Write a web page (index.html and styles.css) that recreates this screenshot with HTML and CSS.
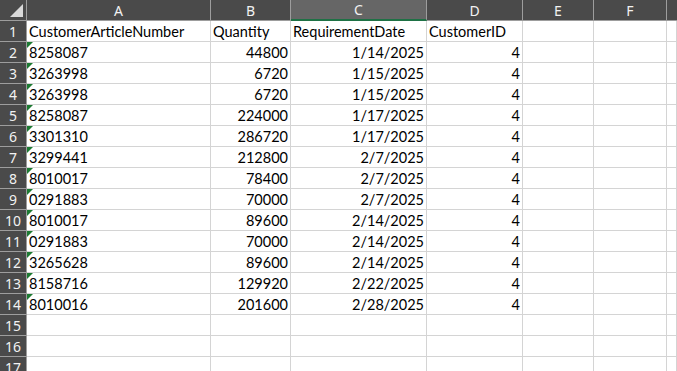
FILE: index.html
```html
<!DOCTYPE html>
<html lang="en">
<head>
    <meta charset="UTF-8">
    <title>Sheet1</title>
    <link rel="stylesheet" href="styles.css">
</head>
<body>

    <div class="sheet">
        <!-- Column headers -->
        <div class="hd corner">
            <svg width="13" height="13" viewBox="0 0 13 13"><polygon points="13,0 13,13 0,13" fill="#d9d9d9"/></svg>
        </div>
        <div class="hd">A</div>
        <div class="hd">B</div>
        <div class="hd selected">C</div>
        <div class="hd">D</div>
        <div class="hd">E</div>
        <div class="hd">F</div>
        <div class="hd last"></div>

        <!-- Row 1 -->
        <div class="rh">1</div>
        <div class="c">CustomerArticleNumber</div>
        <div class="c">Quantity</div>
        <div class="c">RequirementDate</div>
        <div class="c">CustomerID</div>
        <div class="c"></div><div class="c"></div><div class="c"></div>

        <div class="rh">2</div>
        <div class="c txt">8258087</div><div class="c num">44800</div><div class="c num">1/14/2025</div><div class="c num">4</div>
        <div class="c"></div><div class="c"></div><div class="c"></div>

        <div class="rh">3</div>
        <div class="c txt">3263998</div><div class="c num">6720</div><div class="c num">1/15/2025</div><div class="c num">4</div>
        <div class="c"></div><div class="c"></div><div class="c"></div>

        <div class="rh">4</div>
        <div class="c txt">3263998</div><div class="c num">6720</div><div class="c num">1/15/2025</div><div class="c num">4</div>
        <div class="c"></div><div class="c"></div><div class="c"></div>

        <div class="rh">5</div>
        <div class="c txt">8258087</div><div class="c num">224000</div><div class="c num">1/17/2025</div><div class="c num">4</div>
        <div class="c"></div><div class="c"></div><div class="c"></div>

        <div class="rh">6</div>
        <div class="c txt">3301310</div><div class="c num">286720</div><div class="c num">1/17/2025</div><div class="c num">4</div>
        <div class="c"></div><div class="c"></div><div class="c"></div>

        <div class="rh">7</div>
        <div class="c txt">3299441</div><div class="c num">212800</div><div class="c num">2/7/2025</div><div class="c num">4</div>
        <div class="c"></div><div class="c"></div><div class="c"></div>

        <div class="rh">8</div>
        <div class="c txt">8010017</div><div class="c num">78400</div><div class="c num">2/7/2025</div><div class="c num">4</div>
        <div class="c"></div><div class="c"></div><div class="c"></div>

        <div class="rh">9</div>
        <div class="c txt">0291883</div><div class="c num">70000</div><div class="c num">2/7/2025</div><div class="c num">4</div>
        <div class="c"></div><div class="c"></div><div class="c"></div>

        <div class="rh">10</div>
        <div class="c txt">8010017</div><div class="c num">89600</div><div class="c num">2/14/2025</div><div class="c num">4</div>
        <div class="c"></div><div class="c"></div><div class="c"></div>

        <div class="rh">11</div>
        <div class="c txt">0291883</div><div class="c num">70000</div><div class="c num">2/14/2025</div><div class="c num">4</div>
        <div class="c"></div><div class="c"></div><div class="c"></div>

        <div class="rh">12</div>
        <div class="c txt">3265628</div><div class="c num">89600</div><div class="c num">2/14/2025</div><div class="c num">4</div>
        <div class="c"></div><div class="c"></div><div class="c"></div>

        <div class="rh">13</div>
        <div class="c txt">8158716</div><div class="c num">129920</div><div class="c num">2/22/2025</div><div class="c num">4</div>
        <div class="c"></div><div class="c"></div><div class="c"></div>

        <div class="rh">14</div>
        <div class="c txt">8010016</div><div class="c num">201600</div><div class="c num">2/28/2025</div><div class="c num">4</div>
        <div class="c"></div><div class="c"></div><div class="c"></div>

        <!-- Empty rows -->
        <div class="rh">15</div>
        <div class="c"></div><div class="c"></div><div class="c"></div><div class="c"></div>
        <div class="c"></div><div class="c"></div><div class="c"></div>

        <div class="rh">16</div>
        <div class="c"></div><div class="c"></div><div class="c"></div><div class="c"></div>
        <div class="c"></div><div class="c"></div><div class="c"></div>

        <div class="rh">17</div>
        <div class="c"></div><div class="c"></div><div class="c"></div><div class="c"></div>
        <div class="c"></div><div class="c"></div><div class="c"></div>
    </div>

</body>
</html>
```

FILE: styles.css
```css
/* Global */
body {
    margin: 0;
    background: #ffffff;
    overflow: hidden;
    font-family: 'Lato', 'Liberation Sans', sans-serif;
}

/* Grid of cells */
.sheet {
    display: grid;
    grid-template-columns: 27px 184px 80px 136px 96px 71px 73px 1fr;
    grid-auto-rows: 21px;
}

/* Column headers */
.hd {
    background-color: #4a4a4a;
    color: #f2f2f2;
    font-family: 'Noto Sans', sans-serif;
    font-size: 14px;
    display: flex;
    align-items: center;
    justify-content: center;
    border-right: 1px solid #9d9d9d;
    border-bottom: 1px solid #9d9d9d;
    box-sizing: border-box;
}

.hd.corner {
    justify-content: flex-end;
    align-items: flex-end;
    padding: 0 3px 3px 0;
}

.hd.corner svg {
    display: block;
}

.hd.selected {
    background-color: #666666;
    border-bottom: 2px solid #1e7145;
}

.hd.last {
    border-right: none;
}

/* Row headers */
.rh {
    background-color: #4a4a4a;
    color: #f2f2f2;
    font-family: 'Noto Sans', sans-serif;
    font-size: 14px;
    display: flex;
    align-items: center;
    justify-content: center;
    border-right: 1px solid #9d9d9d;
    border-bottom: 1px solid #9d9d9d;
    box-sizing: border-box;
}

/* Cells */
.c {
    position: relative;
    color: #000000;
    font-size: 14.5px;
    line-height: 22px;
    padding: 0 2px;
    white-space: nowrap;
    border-right: 1px solid #d4d4d4;
    border-bottom: 1px solid #d4d4d4;
    box-sizing: border-box;
}

.c.num {
    text-align: right;
}

/* number stored as text marker */
.c.txt::before {
    content: "";
    position: absolute;
    top: 0;
    left: 0;
    border-top: 6px solid #1d7a32;
    border-right: 6px solid transparent;
}
```
